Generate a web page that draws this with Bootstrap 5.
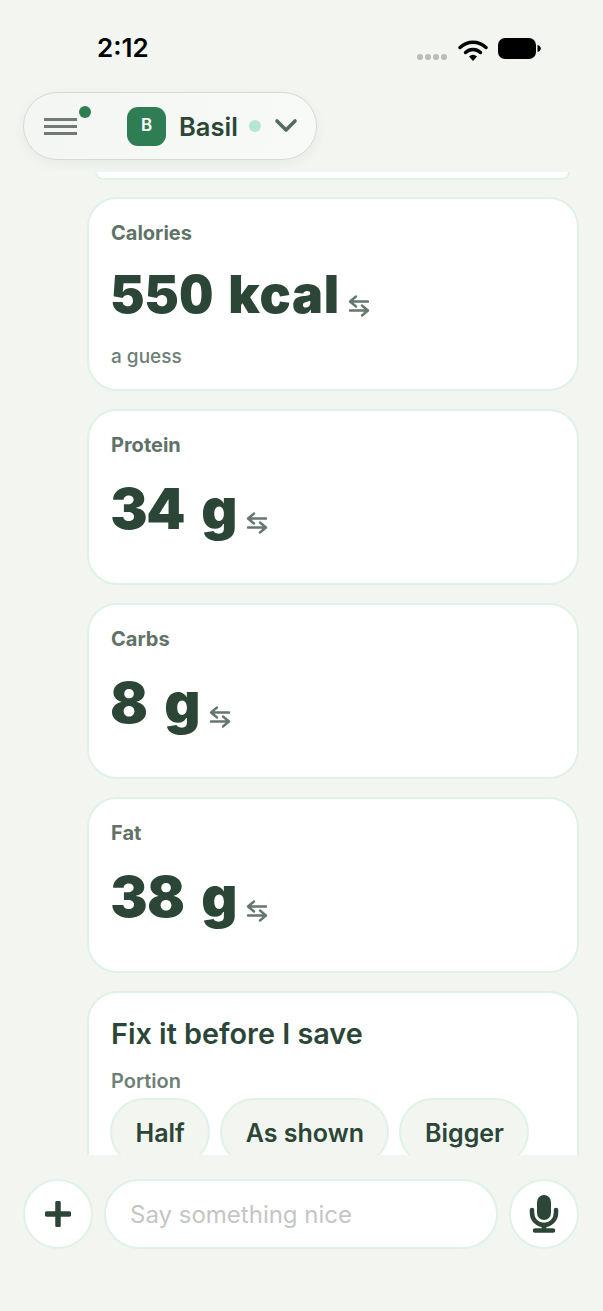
<!DOCTYPE html>
<html lang="en">
<head>
    <meta charset="UTF-8">
    <meta name="viewport" content="width=device-width, initial-scale=1.0">
    <title>Basil</title>
    <link href="https://cdn.jsdelivr.net/npm/bootstrap@5.3.0/dist/css/bootstrap.min.css" rel="stylesheet">
    <style>
        html, body { height: 100%; }
        body {
            background: #f2f5f0;
            font-family: "Inter", "Liberation Sans", sans-serif;
            color: #2b4637;
            overflow: hidden;
        }
        .app-shell { width: 603px; height: 1311px; }
        .status-row { height: 92px; padding: 32px 62px 0 97px; }
        .status-time { font-size: 26px; font-weight: 600; line-height: 32px; color: #000; }
        .signal-dot { width: 6px; height: 6px; border-radius: 50%; background: #b9bcb9; }
        .signal-dots { gap: 2px; margin-top: 22px; margin-right: 11px; }
        .wifi-icon { margin-top: 6px; }
        .batt-icon { margin-top: 6px; margin-left: 10px; }
        .header-zone { height: 80px; padding-left: 23px; position: relative; z-index: 2; }
        .switcher {
            width: 294px; height: 68px;
            border: 1px solid #d6d9d4;
            border-radius: 34px;
            background: linear-gradient(100deg, #f3f6f2, #f7faf6);
            box-shadow: 0 4px 12px rgba(60, 80, 65, .06);
            padding: 0 18px 0 20px;
        }
        .menu-lines { position: relative; width: 33px; }
        .menu-lines span { display: block; height: 3px; background: #6f7b74; margin: 4px 0; }
        .menu-dot {
            position: absolute; top: -8px; right: -14px;
            width: 12px; height: 12px; border-radius: 50%; background: #2f7d52;
        }
        .avatar-tile {
            width: 39px; height: 39px; border-radius: 11px;
            background: #2f7d52; color: #fff;
            font-size: 17px; font-weight: 600;
            margin-left: 50px;
        }
        .bot-name { font-size: 25.5px; font-weight: 600; margin-left: 13px; margin-top: 2px; line-height: 1; }
        .live-dot { width: 12px; height: 12px; border-radius: 50%; background: #b5e6d2; margin-left: 11px; }
        .feed { height: 983px; padding: 0 24px 0 87px; overflow: hidden; }
        .feed-stub {
            height: 8px; margin: 0 9px 17px 8px;
            background: #fff;
            border: 2px solid #dff2e8; border-top: 0;
            border-radius: 0 0 16px 16px;
        }
        .stat-tile {
            background: #fff;
            border: 2px solid #dff2e8;
            border-radius: 30px;
            padding: 22px 22px 0;
            margin-bottom: 18px;
            height: 176px;
        }
        .stat-tile.tall { height: 194px; }
        .stat-label { font-size: 20px; font-weight: 700; color: #5f7268; line-height: 24px; }
        .stat-value {
            font-size: 56px; font-weight: 900; line-height: 64px; margin-top: 20px;
            color: #2b4637; font-variant-numeric: tabular-nums; letter-spacing: 1px;
        }
        .tall .stat-value { font-size: 52px; margin-top: 18px; letter-spacing: .7px; }
        .swap-icon { margin-left: 8px; margin-bottom: 6px; }
        .tall .swap-icon { margin-bottom: 9px; }
        .stat-note { font-size: 19px; font-weight: 500; color: #6e7f76; line-height: 22px; margin-top: 19px; }
        .fix-tile {
            background: #fff;
            border: 2px solid #dff2e8;
            border-bottom: 0;
            border-radius: 30px 30px 0 0;
            padding: 23px 22px 0;
            height: 300px;
        }
        .fix-title { font-size: 28.8px; font-weight: 600; line-height: 36px; color: #2b4637; }
        .fix-label { font-size: 20px; font-weight: 600; color: #6e7f76; line-height: 24px; margin-top: 17px; }
        .pick-row { gap: 10px; margin-top: 5px; margin-left: -1px; }
        .pick-chip {
            height: 68px; padding: 0 23.5px;
            border: 2px solid #dff2e8;
            border-radius: 34px;
            background: #f2f5f0;
            font-size: 25px; font-weight: 600; color: #2b4637; line-height: 66px;
        }
        .composer { padding: 24px 24px 0 23px; gap: 11px; background: #f2f5f0; position: relative; z-index: 2; }
        .round-btn {
            width: 70px; height: 70px; flex: none;
            border: 2px solid #dff2e8; border-radius: 50%; background: #fff; padding: 0;
        }
        .say-input {
            height: 70px; flex: 1; min-width: 0; width: 0;
            border: 2px solid #dff2e8; border-radius: 35px; background: #fff;
            padding: 0 24px; font-size: 24px; color: #2b4637;
        }
        .say-input::placeholder { color: #c3c7c4; opacity: 1; }
    </style>
</head>
<body>
    <div class="app-shell d-flex flex-column">
        <!-- Status bar -->
        <div class="status-row d-flex justify-content-between align-items-start">
            <div class="status-time">2:12</div>
            <div class="d-flex align-items-start">
                <div class="signal-dots d-flex">
                    <span class="signal-dot"></span><span class="signal-dot"></span><span class="signal-dot"></span><span class="signal-dot"></span>
                </div>
                <svg class="wifi-icon" width="30" height="24" viewBox="0 0 30 24">
                    <path d="M2 9.500C9.500 2.500 20.500 2.500 28 9.500" fill="none" stroke="#000" stroke-width="3.400" stroke-linecap="round"/>
                    <path d="M7.500 14.500C12 10.500 18 10.500 22.500 14.500" fill="none" stroke="#000" stroke-width="3.400" stroke-linecap="round"/>
                    <path d="M11 18.500Q15 15 19 18.500L15 23Z" fill="#000"/>
                </svg>
                <svg class="batt-icon" width="43" height="22" viewBox="0 0 43 22">
                    <rect x="0" y="0" width="38" height="21" rx="7" fill="#000"/>
                    <path d="M39.500 7c2.200.5 3.300 2 3.300 3.500S41.700 13.500 39.500 14z" fill="#000"/>
                </svg>
            </div>
        </div>

        <!-- Bot switcher -->
        <div class="header-zone">
            <div class="switcher d-flex align-items-center">
                <div class="menu-lines">
                    <span></span><span></span><span></span>
                    <i class="menu-dot"></i>
                </div>
                <div class="avatar-tile d-flex align-items-center justify-content-center flex-shrink-0">B</div>
                <div class="bot-name">Basil</div>
                <div class="live-dot flex-shrink-0"></div>
                <svg class="ms-auto" width="24" height="16" viewBox="0 0 24 16">
                    <path d="M3 3l9 9 9-9" fill="none" stroke="#566a5f" stroke-width="3.600" stroke-linecap="round" stroke-linejoin="round"/>
                </svg>
            </div>
        </div>

        <!-- Message feed -->
        <div class="feed">
            <div class="feed-stub"></div>

            <div class="stat-tile tall">
                <div class="stat-label">Calories</div>
                <div class="stat-value d-flex align-items-end">550 kcal
                    <svg class="swap-icon" width="22" height="24" viewBox="0 0 22 24"><use href="#swap"/></svg>
                </div>
                <div class="stat-note">a guess</div>
            </div>
            <div class="stat-tile">
                <div class="stat-label">Protein</div>
                <div class="stat-value d-flex align-items-end">34 g
                    <svg class="swap-icon" width="22" height="24" viewBox="0 0 22 24"><use href="#swap"/></svg>
                </div>
            </div>
            <div class="stat-tile">
                <div class="stat-label">Carbs</div>
                <div class="stat-value d-flex align-items-end">8 g
                    <svg class="swap-icon" width="22" height="24" viewBox="0 0 22 24"><use href="#swap"/></svg>
                </div>
            </div>
            <div class="stat-tile">
                <div class="stat-label">Fat</div>
                <div class="stat-value d-flex align-items-end">38 g
                    <svg class="swap-icon" width="22" height="24" viewBox="0 0 22 24"><use href="#swap"/></svg>
                </div>
            </div>

            <div class="fix-tile">
                <div class="fix-title">Fix it before I save</div>
                <div class="fix-label">Portion</div>
                <div class="pick-row d-flex">
                    <div class="pick-chip">Half</div>
                    <div class="pick-chip">As shown</div>
                    <div class="pick-chip">Bigger</div>
                </div>
            </div>
        </div>

        <!-- Composer -->
        <div class="composer d-flex">
            <button class="round-btn d-flex align-items-center justify-content-center" type="button" aria-label="Add">
                <svg width="26" height="26" viewBox="0 0 26 26"><path d="M13 2v22M2 13h22" stroke="#2b4637" stroke-width="5.500" stroke-linecap="round"/></svg>
            </button>
            <input class="say-input" type="text" placeholder="Say something nice">
            <button class="round-btn d-flex align-items-center justify-content-center" type="button" aria-label="Voice">
                <svg width="30" height="38" viewBox="0 0 30 38">
                    <rect x="8" y="0" width="14" height="25" rx="7" fill="#2b4637"/>
                    <path d="M3 15v3a12 12 0 0 0 24 0v-3" fill="none" stroke="#2b4637" stroke-width="4.500" stroke-linecap="round"/>
                    <path d="M15 30v5M6 35.500h18" stroke="#2b4637" stroke-width="4.500" stroke-linecap="round"/>
                </svg>
            </button>
        </div>
    </div>

    <svg width="0" height="0" class="position-absolute">
        <symbol id="swap" viewBox="0 0 22 24">
            <path d="M20 7.500H2.500M8 2.500L2 7.500M8 12.500L2 7.500" fill="none" stroke="#66776e" stroke-width="2.400" stroke-linecap="round" stroke-linejoin="round"/>
            <path d="M2 16.500h17.500M14 11.500l6 5-6 5" fill="none" stroke="#66776e" stroke-width="2.400" stroke-linecap="round" stroke-linejoin="round"/>
        </symbol>
    </svg>

    <script src="https://cdn.jsdelivr.net/npm/bootstrap@5.3.0/dist/js/bootstrap.bundle.min.js"></script>
</body>
</html>
